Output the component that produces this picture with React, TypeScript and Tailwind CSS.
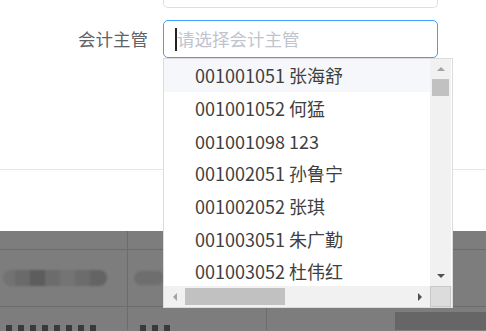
const items = [
  "001001051 张海舒",
  "001001052 何猛",
  "001001098 123",
  "001002051 孙鲁宁",
  "001002052 张琪",
  "001003051 朱广勤",
  "001003052 杜伟红",
];

function Tri({ dir, color }: { dir: "up" | "down" | "left" | "right"; color: string }) {
  const pts = {
    up: "0,4 4,0 8,4",
    down: "0,0 8,0 4,4",
    left: "4,0 4,8 0,4",
    right: "0,0 0,8 4,4",
  }[dir];
  const vert = dir === "up" || dir === "down";
  return (
    <svg width={vert ? 8 : 4} height={vert ? 4 : 8} viewBox={vert ? "0 0 8 4" : "0 0 4 8"}>
      <polygon points={pts} fill={color} />
    </svg>
  );
}

export default function App() {
  return (
    <div
      className="relative h-[331px] w-[486px] overflow-hidden bg-white"
      style={{ fontFamily: '"Noto Sans CJK SC", "Noto Sans", sans-serif' }}
    >
      {/* dialog body */}
      <div className="h-[231px] bg-white">
        <div className="ml-[163px] h-[8px] w-[275px] rounded-b-[5px] border border-t-0 border-[#dcdfe6]" />
        <div className="mt-[12px] flex items-center">
          <div className="w-[163px] pr-[15px] text-right text-[17.5px] leading-none text-[#606266]">会计主管</div>
          <div className="flex h-[38px] w-[275px] items-center rounded-[5px] border border-[#409eff] pl-[11px]">
            <div className="h-[23px] w-[2px] bg-[#222]" />
            <span className="text-[17.5px] leading-none text-[#c0c4cc]">请选择会计主管</span>
          </div>
        </div>
        <div className="mt-[111px] h-px bg-[#e4e7ed]" />
      </div>

      {/* masked page beneath */}
      <div className="h-[100px] bg-[#7d7d7d]">
        <div className="flex h-[19px] border-b border-[#6c6c6c]">
          <div className="w-[128px] border-r border-[#6c6c6c]" />
          <div className="w-[139px] border-r border-[#6c6c6c]" />
        </div>
        <div className="flex h-[57px] border-b border-[#6c6c6c]">
          <div className="flex w-[128px] items-center border-r border-[#6c6c6c] pl-[3px]">
            <div className="flex h-[16px] w-[104px] overflow-hidden rounded-full blur-[1px]">
              <div className="w-[12px] bg-[#727272]" />
              <div className="w-[15px] bg-[#6a6a6a]" />
              <div className="w-[15px] bg-[#5d5d5d]" />
              <div className="w-[15px] bg-[#6c6c6c]" />
              <div className="w-[15px] bg-[#747474]" />
              <div className="w-[15px] bg-[#6c6c6c]" />
              <div className="w-[17px] bg-[#646464]" />
            </div>
          </div>
          <div className="flex w-[139px] items-center border-r border-[#6c6c6c] pl-[6px]">
            <div className="h-[14px] w-[30px] rounded-full bg-[#6e6e6e] blur-[1px]" />
          </div>
          <div className="flex-1" />
        </div>
        <div className="flex h-[23px]">
          <div className="w-[128px] border-r border-[#6c6c6c] pl-[6px] pt-[18px]">
            <div className="h-[10px] w-[95px] bg-[repeating-linear-gradient(90deg,#3a3a3a_0_6px,transparent_6px_12px)] blur-[0.5px]" />
          </div>
          <div className="w-[139px] border-r border-[#6c6c6c] pl-[12px] pt-[18px]">
            <div className="h-[10px] w-[36px] bg-[repeating-linear-gradient(90deg,#3a3a3a_0_6px,transparent_6px_12px)] blur-[0.5px]" />
          </div>
          <div className="flex-1 pl-[128px] pt-[5px]">
            <div className="h-[18px] w-[91px] bg-[#666] blur-[0.5px]" />
          </div>
        </div>
      </div>

      {/* dropdown */}
      <div className="absolute left-[163px] top-[58px] flex h-[250px] w-[290px] flex-col border border-[#dcdcdc] bg-white">
        <div className="flex h-[227px]">
          <div className="w-[266px] overflow-hidden">
            {items.map((t, i) => (
              <div
                key={t}
                className={`flex h-[32.7px] shrink-0 items-center pl-[31px] text-[18px] leading-none text-[#3f3f3f] whitespace-nowrap ${i === 0 ? "bg-[#f5f7fa]" : ""}`}
              >
                {t}
              </div>
            ))}
          </div>
          <div className="flex w-[21px] flex-col items-center bg-[#f1f1f1] px-[2px]">
            <div className="flex h-[20px] items-center justify-center">
              <Tri dir="up" color="#a3a3a3" />
            </div>
            <div className="h-[17px] w-full bg-[#c1c1c1]" />
            <div className="flex-1" />
            <div className="flex h-[20px] items-center justify-center">
              <Tri dir="down" color="#505050" />
            </div>
          </div>
        </div>
        <div className="flex h-[21px] bg-[#f1f1f1]">
          <div className="flex w-[266px] items-center py-[2px]">
            <div className="flex w-[21px] justify-center">
              <Tri dir="left" color="#a3a3a3" />
            </div>
            <div className="h-[17px] w-[100px] bg-[#c1c1c1]" />
            <div className="flex-1" />
            <div className="flex w-[20px] justify-center">
              <Tri dir="right" color="#505050" />
            </div>
          </div>
          <div className="w-[21px] border border-[#c8c8c8] bg-[#dcdcdc]" />
        </div>
      </div>
    </div>
  );
}
